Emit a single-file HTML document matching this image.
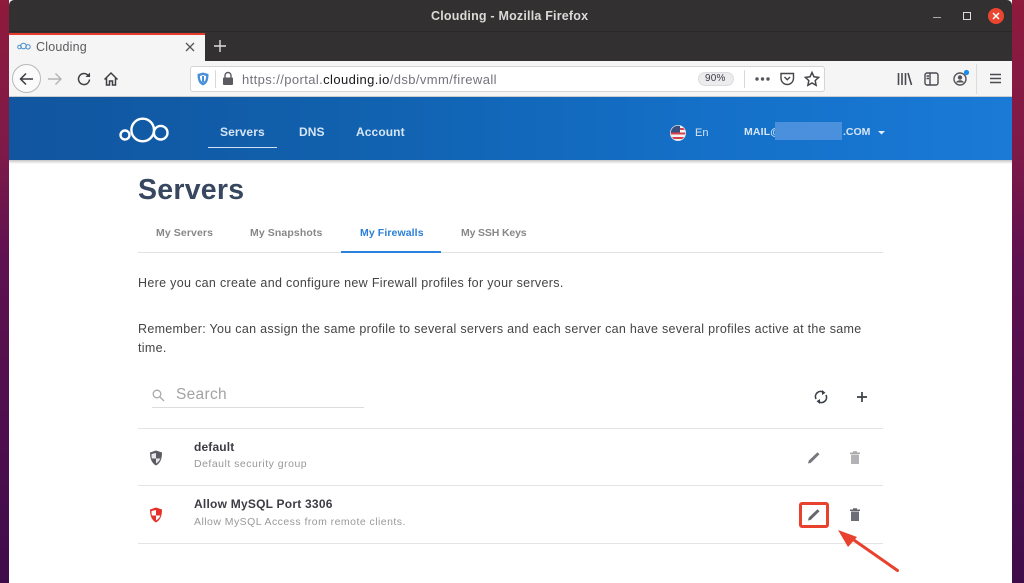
<!DOCTYPE html>
<html><head><meta charset="utf-8"><style>
html,body{margin:0;padding:0;background:#fff}
body{width:1024px;height:583px;overflow:hidden;position:relative;font-family:"Liberation Sans",sans-serif}
#p{position:absolute;left:0;top:0;width:1024px;height:583px;background:#fff;filter:blur(.3px)}
.a{position:absolute}
.t{position:absolute;white-space:nowrap;line-height:1}
svg{position:absolute;overflow:visible}
</style></head><body><div id="p">
<div class="a" style="left:0;top:0;width:9px;height:583px;background:linear-gradient(#8e1a3c 0,#7e1a48 150px,#5e1150 260px,#3f0c4a 583px)"></div>
<div class="a" style="left:1012px;top:0;width:12px;height:583px;background:linear-gradient(#8e1a3c 0,#7e1a48 150px,#5e1150 260px,#3f0c4a 583px)"></div>

<div class="a" style="left:9px;top:0;width:1003px;height:61px;background:#323031;border-radius:5px 5px 0 0"></div>
<div class="a" style="left:9px;top:31px;width:1003px;height:1px;background:#292728"></div>
<div class="t" style="left:431px;top:10px;font-size:12.5px;font-weight:bold;color:#dcdad7;letter-spacing:.2px">Clouding - Mozilla Firefox</div>
<div class="a" style="left:933px;top:17px;width:8px;height:1px;background:#aaa"></div>
<div class="a" style="left:963px;top:12px;width:6px;height:6px;border:1px solid #ddd"></div>
<div class="a" style="left:988px;top:8px;width:16px;height:16px;border-radius:50%;background:#e9452f"></div>
<svg style="left:988px;top:8px" width="16" height="16"><path d="M5 5l6 6M11 5l-6 6" stroke="#fff" stroke-width="1.5"/></svg>

<div class="a" style="left:9px;top:33px;width:196px;height:28px;background:#f5f5f6"></div>
<div class="a" style="left:9px;top:33px;width:196px;height:2px;background:#e8392c"></div>
<svg style="left:17px;top:42px" width="14" height="9" viewBox="0 0 14 9" fill="none" stroke="#4a90d0" stroke-width="1"><circle cx="2.5" cy="5" r="1.8"/><circle cx="6.5" cy="4" r="2.8"/><circle cx="11" cy="4.8" r="2.2"/></svg>
<div class="t" style="left:36px;top:41px;font-size:12.5px;color:#5c5c60;letter-spacing:.2px">Clouding</div>
<svg style="left:185px;top:42px" width="10" height="10"><path d="M1 1l8 8M9 1l-8 8" stroke="#555" stroke-width="1.3"/></svg>
<svg style="left:214px;top:40px" width="12" height="12"><path d="M6 0v12M0 6h12" stroke="#ddd" stroke-width="1.4"/></svg>

<div class="a" style="left:9px;top:61px;width:1003px;height:36px;background:#f5f5f6;border-bottom:1px solid #ccc;box-sizing:border-box"></div>
<div class="a" style="left:12px;top:64px;width:29px;height:29px;border:1px solid #b9b9bb;border-radius:50%;box-sizing:border-box;background:#fbfbfb"></div>
<svg style="left:19px;top:72px" width="14" height="14" fill="none" stroke="#3b3b40" stroke-width="1.5"><path d="M14 7H1.500M7 1.500L1.500 7 7 12.500"/></svg>
<svg style="left:48px;top:72px" width="14" height="14" fill="none" stroke="#b3b3b5" stroke-width="1.400"><path d="M0 7h13M7.500 1.500L13 7l-5.500 5.500"/></svg>
<svg style="left:77px;top:72px" width="14" height="14" fill="none" stroke="#3f3f44" stroke-width="1.500"><path d="M12.500 7.500A5.500 5.500 0 1 1 10.500 2.800L13 4.500"/><path d="M13 .5V5H8.500" fill="#3f3f44" stroke="none"/></svg>
<svg style="left:104px;top:72px" width="14" height="14" fill="none" stroke="#3f3f44" stroke-width="1.500"><path d="M.5 7.500L7 1l6.500 6.500M2.500 6v7h3V9h3v4h3V6"/></svg>

<div class="a" style="left:190px;top:66px;width:635px;height:26px;background:#fff;border:1px solid #d5d5d7;border-radius:3px;box-sizing:border-box"></div>
<svg style="left:197px;top:72px" width="12" height="14" viewBox="0 0 12 14"><path d="M6 .5L11.500 2c0 6-1 9.500-5.500 11.500C1.500 11.500.5 8 .5 2z" fill="#4a90d9"/><path d="M6 3l3 1c0 3-.5 5-3 6.500z" fill="#fff"/><path d="M6 3l-3 1c0 3 .5 5 3 6.500z" fill="#fff"/><rect x="5" y="4" width="2" height="6" fill="#4a90d9"/></svg>
<div class="a" style="left:215px;top:70px;width:1px;height:18px;background:#d8d8da"></div>
<svg style="left:222px;top:72px" width="12" height="13"><rect x="1" y="5.500" width="10" height="7.500" rx="1" fill="#5a5a60"/><path d="M3 6V3.500a3 3 0 0 1 6 0V6" fill="none" stroke="#5a5a60" stroke-width="1.400"/></svg>
<div class="t" style="left:242px;top:72.500px;font-size:13px;color:#73737a;letter-spacing:.4px">https://portal.<span style="color:#17171c">clouding.io</span>/dsb/vmm/firewall</div>
<div class="a" style="left:698px;top:72px;width:36px;height:14px;border-radius:7px;background:#ececee;border:1px solid #dcdcde;box-sizing:border-box"></div>
<div class="t" style="left:705px;top:74px;font-size:10px;color:#3a3a40;letter-spacing:.2px">90%</div>
<div class="a" style="left:744px;top:70px;width:1px;height:18px;background:#d8d8da"></div>
<svg style="left:755px;top:77px" width="15" height="4" fill="#55555a"><circle cx="2" cy="2" r="1.700"/><circle cx="7.500" cy="2" r="1.700"/><circle cx="13" cy="2" r="1.700"/></svg>
<svg style="left:780px;top:72px" width="15" height="14" fill="none" stroke="#45454a" stroke-width="1.400"><path d="M1 1.500h12.500V6c0 4-3 6.500-6.250 6.500S1 10 1 6z"/><path d="M4.500 5L7.250 7.800 10 5"/></svg>
<svg style="left:804px;top:71px" width="16" height="16" fill="none" stroke="#45454a" stroke-width="1.500"><path d="M8 1.500l2 4.300 4.600.6-3.400 3.200.9 4.700L8 12l-4.100 2.300.9-4.700L1.400 6.400 6 5.800z"/></svg>

<svg style="left:897px;top:72px" width="16" height="14" stroke="#4a4a50" stroke-width="1.600" fill="none"><path d="M1.500 1v12M5 1v12M8.500 1v12M11 1l3.500 12"/></svg>
<svg style="left:924px;top:72px" width="15" height="14" fill="none" stroke="#4a4a50" stroke-width="1.400"><rect x="1" y="1" width="13" height="12" rx="2"/><path d="M6 1v12M2.500 4H5M2.500 6.500H5"/></svg>
<svg style="left:953px;top:70px" width="18" height="16"><circle cx="7" cy="9" r="6" fill="none" stroke="#55555a" stroke-width="1.400"/><circle cx="7" cy="7.500" r="2.200" fill="#55555a"/><path d="M3 12.500c1-3 7-3 8 0" fill="#55555a"/><circle cx="13.500" cy="2.500" r="2.600" fill="#1c8ce8"/></svg>
<div class="a" style="left:976px;top:64px;width:1px;height:30px;background:#dcdcde"></div>
<svg style="left:990px;top:73px" width="11" height="12"><path d="M0 1.500h11M0 5.500h11M0 9.500h11" stroke="#4a4a50" stroke-width="1.500"/></svg>

<div class="a" style="left:9px;top:97px;width:1003px;height:63px;background:linear-gradient(90deg,#11559f 0,#1161ae 340px,#1470c8 700px,#1a7ad6 1003px)"></div>
<div class="a" style="left:9px;top:160px;width:1003px;height:4px;background:linear-gradient(#c5c5c5,#fff)"></div>
<svg style="left:118px;top:116px" width="52" height="28" fill="none" stroke="#fff" stroke-width="2.400"><circle cx="7" cy="19" r="4.500"/><circle cx="24.700" cy="14" r="11.300"/><circle cx="42.700" cy="16.700" r="6.800"/></svg>
<div class="t" style="left:220px;top:126px;font-size:12px;font-weight:bold;color:#d6e5f4;letter-spacing:.1px">Servers</div>
<div class="a" style="left:208px;top:147px;width:69px;height:1px;background:#cfe1f3"></div>
<div class="t" style="left:299px;top:126px;font-size:12px;font-weight:bold;color:#d6e5f4;letter-spacing:.1px">DNS</div>
<div class="t" style="left:356px;top:126px;font-size:12px;font-weight:bold;color:#d6e5f4;letter-spacing:.1px">Account</div>
<svg style="left:670px;top:125px" width="16" height="16"><defs><clipPath id="f"><circle cx="8" cy="8" r="8"/></clipPath></defs><g clip-path="url(#f)"><rect width="16" height="16" fill="#f4f4f4"/><path d="M0 4h16M0 8.500h16M0 13h16" stroke="#d9404a" stroke-width="2"/><rect width="10" height="7.500" fill="#36507f"/></g><circle cx="8" cy="8" r="7.600" fill="none" stroke="#d8dfe8" stroke-width=".8"/></svg>
<div class="t" style="left:695px;top:128px;font-size:11px;color:#d6e5f4">En</div>
<div class="t" style="left:744px;top:127px;font-size:10.500px;color:#d6e5f4;font-weight:bold;letter-spacing:.15px">MAIL@</div>
<div class="a" style="left:775px;top:122px;width:67px;height:18px;background:#4a90dd"></div>
<div class="t" style="left:843px;top:127px;font-size:10.500px;color:#d6e5f4;font-weight:bold">.COM</div>
<svg style="left:878px;top:131px" width="8" height="4"><path d="M0 0h7L3.500 3.500z" fill="#e4eef8"/></svg>

<div class="t" style="left:138px;top:176px;font-size:28.500px;font-weight:bold;color:#37475f;letter-spacing:.25px">Servers</div>
<div class="a" style="left:138px;top:252px;width:745px;height:1px;background:#e2e2e2"></div>
<div class="a" style="left:341px;top:251px;width:100px;height:2px;background:#2a82dc"></div>
<div class="t" style="left:156px;top:228px;font-size:10.500px;font-weight:bold;color:#878787;letter-spacing:.1px">My Servers</div>
<div class="t" style="left:250px;top:228px;font-size:10.500px;font-weight:bold;color:#878787;letter-spacing:.1px">My Snapshots</div>
<div class="t" style="left:360px;top:228px;font-size:10.500px;font-weight:bold;color:#2a7fd6;letter-spacing:.1px">My Firewalls</div>
<div class="t" style="left:461px;top:228px;font-size:10.500px;font-weight:bold;color:#878787;letter-spacing:-.15px">My SSH Keys</div>

<div class="t" style="left:138px;top:277px;font-size:12.500px;color:#444;letter-spacing:.32px">Here you can create and configure new Firewall profiles for your servers.</div>
<div class="t" style="left:138px;top:323px;font-size:12.500px;color:#444;letter-spacing:.3px">Remember: You can assign the same profile to several servers and each server can have several profiles active at the same</div>
<div class="t" style="left:138px;top:342px;font-size:12.500px;color:#444;letter-spacing:.3px">time.</div>

<svg style="left:152px;top:389px" width="13" height="13" fill="none" stroke="#a9a9a9" stroke-width="1.300"><circle cx="5" cy="5" r="3.800"/><path d="M8 8l4 4"/></svg>
<div class="t" style="left:176px;top:387px;font-size:15.500px;color:#a3a3a3;letter-spacing:.3px">Search</div>
<div class="a" style="left:152px;top:407px;width:212px;height:1px;background:#dcdcdc"></div>
<svg style="left:814px;top:390px" width="14" height="14" fill="none" stroke="#3a3f48" stroke-width="1.600"><path d="M2 9A5.200 5.200 0 0 1 9.500 2.300M12 5a5.200 5.200 0 0 1-7.500 6.700"/><path d="M8 0l3.500 2.800L8 5z" fill="#3a3f48" stroke="none"/><path d="M6 14l-3.500-2.800L6 9z" fill="#3a3f48" stroke="none"/></svg>
<svg style="left:857px;top:392px" width="10" height="10"><path d="M5 0v10M0 5h10" stroke="#3a3f48" stroke-width="1.700"/></svg>

<div class="a" style="left:138px;top:428px;width:745px;height:1px;background:#e4e4e4"></div>
<div class="a" style="left:138px;top:485px;width:745px;height:1px;background:#e4e4e4"></div>
<div class="a" style="left:138px;top:543px;width:745px;height:1px;background:#e4e4e4"></div>

<svg style="left:149px;top:450px" width="14" height="16" viewBox="0 0 14 16"><path d="M7 .5L13 2.500c0 6-1.500 10.500-6 13C2.500 13 1 8.500 1 2.500z" fill="#5b5b63"/><path d="M7 3v5.500h4.300C11 10 9 12.500 7 13.500V8.500H2.800C2.500 7 2.500 5.500 2.500 4z" fill="#e8e8ea"/></svg>
<div class="t" style="left:194px;top:441px;font-size:12px;font-weight:bold;color:#3c3c44;letter-spacing:.15px">default</div>
<div class="t" style="left:194px;top:459px;font-size:10.500px;color:#999;letter-spacing:.5px">Default security group</div>

<svg style="left:149px;top:507px" width="14" height="16" viewBox="0 0 14 16"><path d="M7 .5L13 2.500c0 6-1.500 10.500-6 13C2.500 13 1 8.500 1 2.500z" fill="#e5302a"/><path d="M7 3v5.500h4.300C11 10 9 12.500 7 13.500V8.500H2.800C2.500 7 2.500 5.500 2.500 4z" fill="#fff"/></svg>
<div class="t" style="left:194px;top:498px;font-size:12px;font-weight:bold;color:#3c3c44;letter-spacing:.23px">Allow MySQL Port 3306</div>
<div class="t" style="left:194px;top:517px;font-size:10.500px;color:#999;letter-spacing:.46px">Allow MySQL Access from remote clients.</div>

<svg style="left:808px;top:451px" width="13" height="13"><path d="M0 12.500l.8-3L9.500 1.200l2 2-8.700 8.700z" fill="#77777d"/></svg>
<svg style="left:850px;top:451px" width="10" height="13"><path d="M0 1.500h10v1.500H0zM3 .3h4v1.500H3z" fill="#aaa"/><path d="M1 3.500h8V13H1z" fill="#b3b3b7"/></svg>
<svg style="left:808px;top:508px" width="13" height="13"><path d="M0 12.500l.8-3L9.500 1.200l2 2-8.700 8.700z" fill="#66666c"/></svg>
<svg style="left:850px;top:508px" width="10" height="13"><path d="M0 1.500h10v1.500H0zM3 .3h4v1.500H3z" fill="#66666c"/><path d="M1 3.500h8V13H1z" fill="#6d6d75"/></svg>

<div class="a" style="left:799px;top:502px;width:30px;height:26px;border:3px solid #e8412d;border-radius:3px;box-sizing:border-box"></div>
<svg style="left:835px;top:525px" width="66" height="50"><path d="M62.500 45.500L16 13" stroke="#e8412d" stroke-width="3" stroke-linecap="round"/><path d="M3 5L22 12 13 22z" fill="#e8412d"/></svg>
</div></body></html>
